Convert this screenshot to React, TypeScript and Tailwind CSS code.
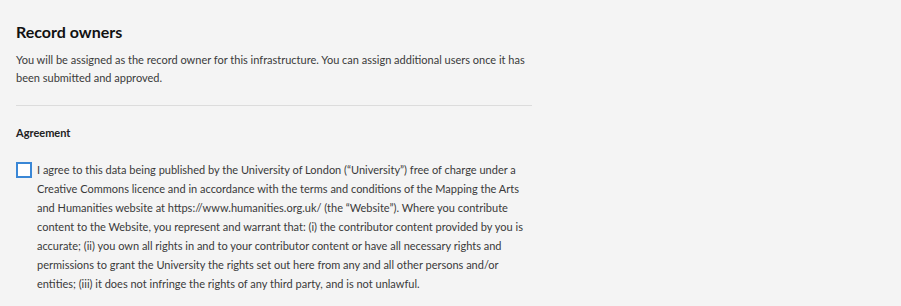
const App = () => {
  return (
    <div className="min-h-[306px] w-full bg-[#f4f4f4] font-['Lato','Noto_Sans',sans-serif] text-[#3a3a3a]">
      <div className="w-[532px] pl-4 pt-[22px]">
        <h2 className="text-[16px] font-bold leading-[20px] text-[#111]">Record owners</h2>
        <p className="mt-[9px] text-[11px] leading-[18px]">
          You will be assigned as the record owner for this infrastructure. You can assign additional users once it has been submitted and approved.
        </p>
        <hr className="mt-[18px] border-t border-[#dcdcdc]" />
        <h3 className="mt-[19px] text-[11px] font-bold leading-[16px] text-[#222]">Agreement</h3>
        <label className="mt-[19px] flex items-start gap-[5px]">
          <span className="mt-[2px] h-[16px] w-[16px] shrink-0 border-2 border-[#3a87d6] bg-white" />
          <span className="text-[11px] leading-[19px]">
            I agree to this data being published by the University of London (“University”) free of charge under a Creative Commons licence and in accordance with the terms and conditions of the Mapping the Arts and Humanities website at https://www.humanities.org.uk/ (the “Website”). Where you contribute content to the Website, you represent and warrant that: (i) the contributor content provided by you is accurate; (ii) you own all rights in and to your contributor content or have all necessary rights and permissions to grant the University the rights set out here from any and all other persons and/or entities; (iii) it does not infringe the rights of any third party, and is not unlawful.
          </span>
        </label>
      </div>
    </div>
  );
};

export default App;
